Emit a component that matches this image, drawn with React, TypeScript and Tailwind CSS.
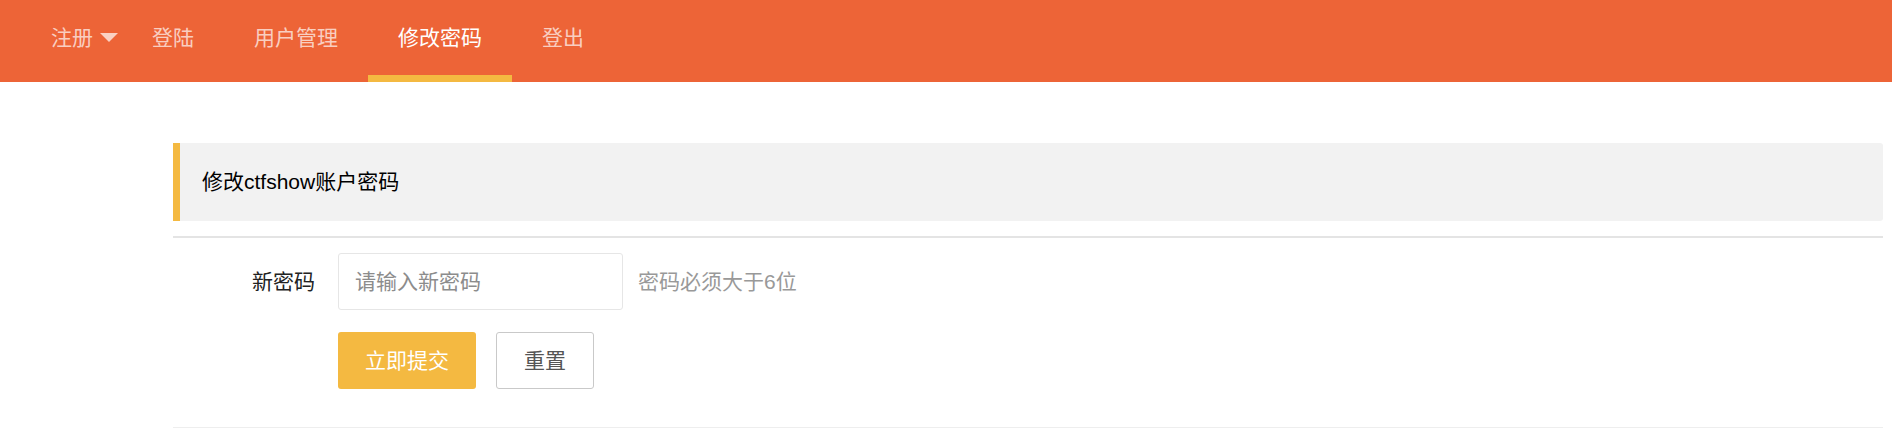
const navItems = [
  { label: '注册', more: true },
  { label: '登陆' },
  { label: '用户管理' },
  { label: '修改密码', active: true },
  { label: '登出' },
];

function Nav() {
  return (
    <ul className="flex h-[82px] bg-[#ED6437] pl-[21px]">
      {navItems.map((item) => (
        <li
          key={item.label}
          className={
            'relative flex h-[82px] items-start text-[21px] leading-[75px] ' +
            (item.more ? 'pl-[30px] pr-[4px] ' : 'px-[30px] ') +
            (item.active ? 'text-white' : 'text-white/70')
          }
        >
          <span>{item.label}</span>
          {item.more && (
            <span className="ml-[7px] mt-[33px] h-0 w-0 border-x-[9px] border-t-[9px] border-x-transparent border-t-white/70" />
          )}
          {item.active && <span className="absolute bottom-0 left-0 h-[7px] w-full bg-[#F4B941]" />}
        </li>
      ))}
    </ul>
  );
}

export default function App() {
  return (
    <div className="min-h-[445px] bg-white font-['Liberation_Sans','Noto_Sans_CJK_SC',sans-serif]">
      <Nav />

      <div className="ml-[173px] mr-[9px] pt-[61px]">
        <div className="flex h-[78px] items-center rounded-r-[3px] border-l-[7px] border-[#F4B941] bg-[#F2F2F2] pl-[22px] text-[21px] text-black">
          修改ctfshow账户密码
        </div>

        <div className="mt-[15px] h-[2px] bg-[#E4E4E4]" />

        <form className="pt-[15px]" onSubmit={(e) => e.preventDefault()}>
          <div className="flex items-center">
            <label className="w-[165px] pr-[23px] text-right text-[21px] text-[#222]">新密码</label>
            <input
              type="password"
              placeholder="请输入新密码"
              className="h-[57px] w-[285px] rounded-[3px] border border-[#E6E6E6] bg-white pl-[16px] text-[21px] outline-none placeholder:text-[#8C8C8C]"
            />
            <span className="ml-[15px] text-[21px] text-[#999]">密码必须大于6位</span>
          </div>

          <div className="mt-[22px] flex pl-[165px]">
            <button className="h-[57px] w-[138px] rounded-[3px] bg-[#F4B941] text-[21px] text-white">
              立即提交
            </button>
            <button
              type="reset"
              className="ml-[20px] h-[57px] w-[98px] rounded-[3px] border border-[#C9C9C9] bg-white text-[21px] text-[#555]"
            >
              重置
            </button>
          </div>
        </form>

        <div className="mt-[38px] h-px bg-[#EEEEEE]" />
      </div>
    </div>
  );
}
